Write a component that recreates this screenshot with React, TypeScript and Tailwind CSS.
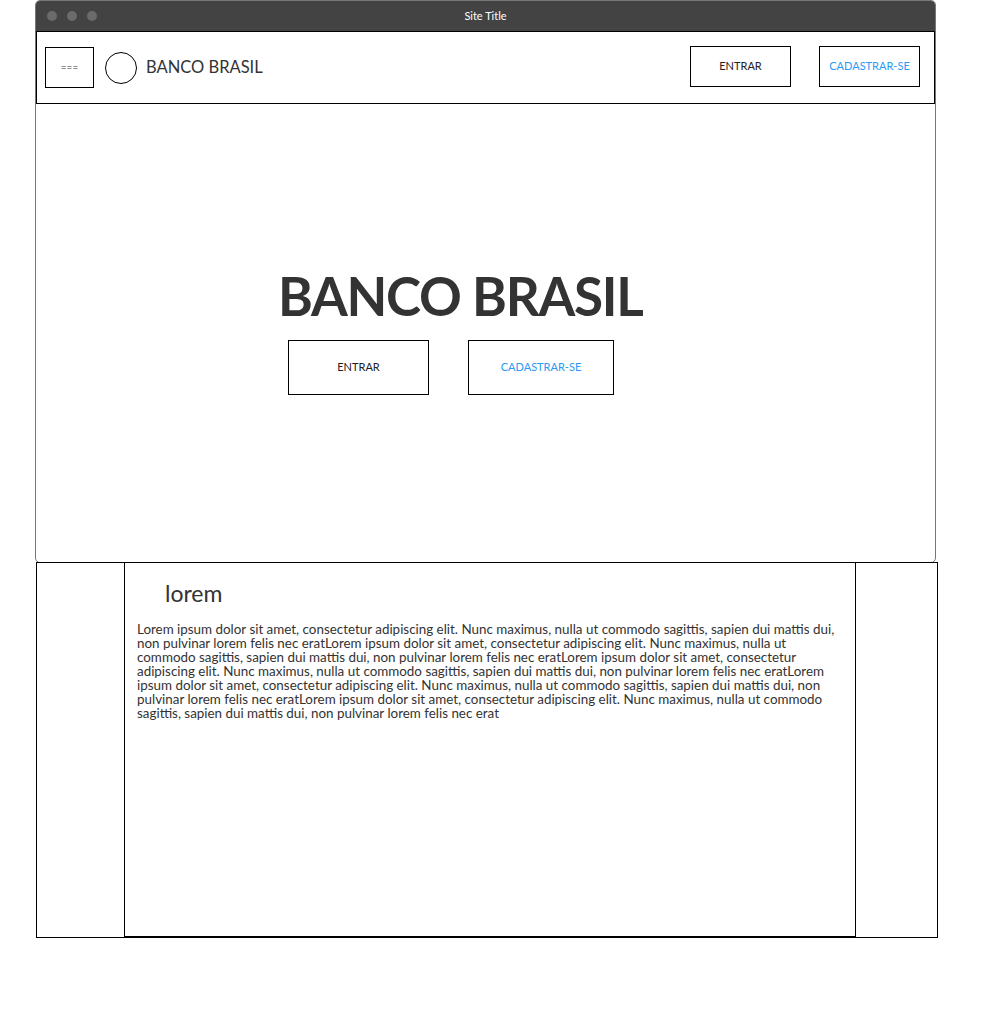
import React from 'react';

const lines = [
  'Lorem ipsum dolor sit amet, consectetur adipiscing elit. Nunc maximus, nulla ut commodo sagittis, sapien dui mattis dui,',
  'non pulvinar lorem felis nec eratLorem ipsum dolor sit amet, consectetur adipiscing elit. Nunc maximus, nulla ut',
  'commodo sagittis, sapien dui mattis dui, non pulvinar lorem felis nec eratLorem ipsum dolor sit amet, consectetur',
  'adipiscing elit. Nunc maximus, nulla ut commodo sagittis, sapien dui mattis dui, non pulvinar lorem felis nec eratLorem',
  'ipsum dolor sit amet, consectetur adipiscing elit. Nunc maximus, nulla ut commodo sagittis, sapien dui mattis dui, non',
  'pulvinar lorem felis nec eratLorem ipsum dolor sit amet, consectetur adipiscing elit. Nunc maximus, nulla ut commodo',
  'sagittis, sapien dui mattis dui, non pulvinar lorem felis nec erat',
];

export default function App() {
  return (
    <div className="w-[1002px] h-[1036px] bg-white text-[#333] font-['Lato','Noto_Sans',sans-serif]">
      {/* Browser window */}
      <div className="ml-[35px] w-[901px] h-[563px] border border-[#777] rounded-[5px] flex flex-col overflow-hidden">
        {/* Title bar */}
        <div className="h-[30px] bg-[#434343] relative flex items-center justify-center shrink-0">
          <div className="absolute left-[11px] top-[10px] flex gap-[10px]">
            <span className="w-[10px] h-[10px] rounded-full bg-[#6b6b6b]" />
            <span className="w-[10px] h-[10px] rounded-full bg-[#6b6b6b]" />
            <span className="w-[10px] h-[10px] rounded-full bg-[#6b6b6b]" />
          </div>
          <span className="text-[11px] text-white">Site Title</span>
        </div>

        {/* Header */}
        <header className="h-[73px] border border-black flex items-center shrink-0">
          <div className="ml-[8px] w-[49px] h-[41px] border border-black flex items-center justify-center text-[10px] text-[#333]">
            ===
          </div>
          <div className="ml-[11px] w-[32px] h-[32px] rounded-full border border-black" />
          <span className="ml-[9px] text-[16.5px]">BANCO BRASIL</span>
          <div className="ml-auto w-[101px] h-[41px] mb-[2px] border border-black flex items-center justify-center text-[11px] text-[#222]">
            ENTRAR
          </div>
          <div className="ml-[28px] mr-[14px] mb-[2px] w-[101px] h-[41px] border border-black flex items-center justify-center text-[11px] text-[#2b9af3]">
            CADASTRAR-SE
          </div>
        </header>

        {/* Hero */}
        <section className="flex-1 flex flex-col items-start pt-[165px] pl-[242px]">
          <h1 className="text-[53px] font-bold leading-none tracking-[-1.3px] text-[#333]">BANCO BRASIL</h1>
          <div className="mt-[18px] ml-[10px] flex gap-[39px]">
            <div className="w-[141px] h-[55px] border border-black flex items-center justify-center text-[11px] text-[#222]">
              ENTRAR
            </div>
            <div className="w-[146px] h-[55px] border border-black flex items-center justify-center text-[11px] text-[#2b9af3]">
              CADASTRAR-SE
            </div>
          </div>
        </section>
      </div>

      {/* Lower content */}
      <div className="ml-[36px] -mt-px w-[902px] h-[376px] border border-black flex">
        <div className="w-[87px] shrink-0" />
        <div className="w-[732px] -mt-px border border-black pt-[15px] pl-[12px] pr-[8px]">
          <h2 className="ml-[28px] text-[23px] leading-[30px] text-[#333]">lorem</h2>
          <p className="mt-[14px] text-[13.4px] leading-[14px] text-[#333]">
            {lines.map((l) => (
              <span key={l} className="block whitespace-nowrap">
                {l}
              </span>
            ))}
          </p>
        </div>
        <div className="flex-1" />
      </div>
    </div>
  );
}
